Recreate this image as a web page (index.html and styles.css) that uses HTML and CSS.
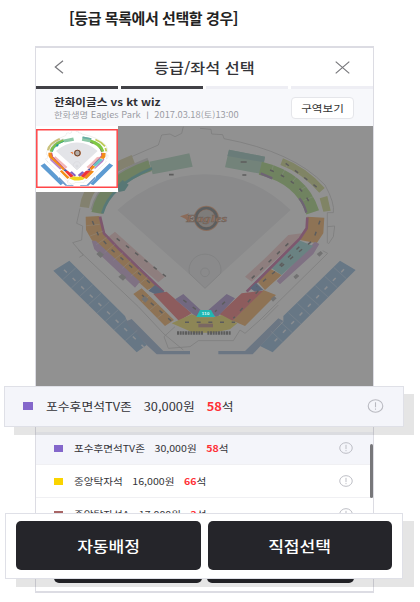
FILE: index.html
```html
<!DOCTYPE html>
<html lang="ko">
<head>
<meta charset="utf-8">
<title>등급/좌석 선택</title>
<link rel="stylesheet" href="styles.css">
</head>
<body>
<h1 class="caption">[등급 목록에서 선택할 경우]</h1>
<main class="phone">
  <header class="bar">
    <svg class="back" viewBox="0 0 10 14"><path d="M9 .8 1.3 7 9 13.2"/></svg>
    <h2 class="bar-title"><span class="wide">등급/좌석 선택</span></h2>
    <svg class="close" viewBox="0 0 15 13"><path d="M.7.6 14.3 12.4M14.3.6.7 12.4"/></svg>
  </header>
  <div class="steps"><i class="on"></i><i class="on"></i><i></i><i></i></div>
  <section class="game">
    <div class="game-text">
      <strong class="wide teams">한화이글스 vs kt wiz</strong>
      <span class="wide place">한화생명 Eagles Park ㅣ 2017.03.18(토)13:00</span>
    </div>
    <button class="zone"><span class="wide">구역보기</span></button>
  </section>
  <section class="map">
    <svg class="stadium" viewBox="18 18 1011 780" preserveAspectRatio="none">
      <defs>
        <g id="park">
          <g fill="none" stroke="#b4b4b4" stroke-width="2.5">
            <path d="M270 125 385 75 395 45 420 42 435 50 455 40 460 20M510 25 543 28 545 42 578 44 582 56Q790 95 885 195 915 250 910 278H892V370M892 320 914 318 910 350 895 372M878 392 893 400 690 600 645 640 630 630 610 662H505L480 680 415 685 402 650 435 620M150 265 140 310 158 318 155 360 128 368 160 405 148 412M145 390 325 560 402 642M745 555 700 600M402 642 460 690"/>
          </g>
          <path fill="#e3e4e8" d="M262 270Q380 165 520 163 670 160 782 270L525 505Z"/>
          <g fill="none" stroke="#c2c3c6" stroke-width="3"><path d="M478 460A48 48 0 1 1 572 460L525 505Z"/><circle cx="525" cy="457" r="13"/></g>
          <path fill="#8cc8a6" d="M358 125 478 100 488 140 368 163ZM597 89 705 110 695 162 585 142Z"/>
          <path fill="#68ada4" d="M597 89 705 110 702 127 592 108Z"/>
          <g fill="none">
            <path stroke="#c9c27c" stroke-width="28" d="M163 262Q175 170 310 118"/>
            <path stroke="#c5c6c5" stroke-width="14" d="M188 270Q212 175 355 120"/>
            <path stroke="#7fc04c" stroke-width="34" d="M201 279Q220 185 360 137"/>
            <path stroke="#20a09b" stroke-width="8" d="M217 280Q240 198 366 145"/>
            <path stroke="#80c844" stroke-width="40" d="M691 145Q815 175 848 277"/>
            <path stroke="#784e91" stroke-width="7" d="m692 160 35 15M808 235Q822 252 829 278"/>
            <path stroke="#becb56" stroke-width="22" d="M755 125Q822 150 876 211"/>
          </g>
          <path fill="#becb56" d="m869 235 23-7 10 44-22 3Z"/>
          <path fill="#249994" d="m264 194 14-14 18 14-12 18-18 4Z"/>
          <path fill="#f28c18" d="M167 290 208 288 222 340 265 385 378 497 352 510 230 400 185 360 168 330ZM310 522 335 505 432 600 405 618ZM700 510 738 525 645 618 608 602ZM680 482 718 445 755 465 705 510ZM832 290 883 293 880 340 860 370 810 360 832 325Z"/>
          <path fill="#b884c8" d="M185 362 197 362 330 485 315 503 193 388ZM855 365 868 372 850 402 750 493 740 483Z"/>
          <path fill="#f2b7b7" d="M230 355 255 335 405 470 385 487ZM645 470 705 415 775 345 815 340 808 355 665 485Z"/>
          <path fill="#68c5c5" d="M720 442 805 360 850 378 755 465Z"/>
          <path fill="none" stroke="#b32178" stroke-width="8" d="M210 290 222 340 268 388 400 515M832 292 830 325 810 355 650 515"/>
          <path fill="#345ea6" d="M355 512 375 495 412 522 380 525ZM660 505 678 488 700 510 675 515Z"/>
          <path fill="#ef3338" d="M370 522 410 515 485 580 447 603ZM568 582 635 520 700 512 605 605Z"/>
          <path fill="#8662bd" d="M435 538 460 522 512 570 500 592ZM535 570 590 522 615 535 560 593Z"/>
          <path fill="#f0d51d" d="M425 610 485 583 510 592H550L575 585 622 610 600 628 550 638H490Z"/>
          <path fill="#5d9bd2" d="M70 452 118 422 285 588 290 600 350 675 320 697ZM930 422 977 450 728 697 690 678 760 605V588Z"/>
          <path fill="#6b98ca" d="M285 605 305 597 400 693H480V703H380L350 675ZM565 693H645L745 595 760 603 668 703H565Z"/>
        </g>
        <g id="emblem">
          <circle cx="529" cy="295" r="32" fill="#b5ada8" stroke="#e37738" stroke-width="12"/>
          <circle cx="529" cy="295" r="31" fill="none" stroke="#303a40" stroke-width="8"/>
          <path fill="#e96e2a" d="m450 289 28-9-8 9 17-1-14 10 15 1-13 8-8-10Z"/>
        </g>
      </defs>
      <use href="#park"/>
      <path fill="none" stroke="#fff" stroke-opacity=".5" stroke-width="2" d="m98 479 39-35M124 504l38-35M149 529l39-35M175 554l38-34M201 579l37-34M226 604l38-34M252 630l36-31M286 662l36-31M949 476l-38-34M922 503l-38-34M894 531l-38-34M868 557l-39-34M840 585l-38-35M813 612l-38-34M787 638l-38-34M758 666l-36-33M169 317l40-4M178 349l42-16M199 374l31-22M224 398l30-25M250 421l29-23M277 445l26-23M302 469l27-22M327 493l26-22M335 547l26-22M358 571l27-21M382 594l26-20M726 150l10-35M756 165l17-32M786 187l22-27M806 213l31-19M820 242l34-14"/>
      <path fill="#a75f49" d="M505 611h44v11h-44Z"/>
      <path fill="none" stroke="#333" stroke-width="4.5" stroke-dasharray="12 23" d="M187 303 205 345 240 385 375 502M336 525 432 610M260 355 415 475M685 512 610 595M870 302 850 360 680 500M720 150Q820 190 845 265M767 130 865 205M775 370 660 480M808 380 735 450M460 540 500 570M585 545 555 575M465 607h150"/>
      <path fill="none" stroke="#e4eefa" stroke-width="4.5" stroke-dasharray="12 24" d="M102 449 345 685M942 448 728 670"/>
      <path fill="none" stroke="#333" stroke-width="5" d="M417 164h14M632 126h18M637 165h12"/>
      <path fill="none" stroke="#333" stroke-width="10" stroke-dasharray="6 2" d="M441 639h79M532 639h72"/>
      <path fill="#888" d="m201 412 10-9 13 11-10 10ZM267 480l11-9 13 11-10 10ZM336 547l10-9 12 10-10 10ZM862 412l12-9 7 7-11 10ZM792 480l10-9 8 7-11 10ZM724 547l10-9 8 7-11 10Z" transform="translate(-2 -10)"/>
      <use href="#emblem"/>
      <text class="emblem" x="468" y="306" textLength="124" lengthAdjust="spacingAndGlyphs">Eagles</text>
      <path class="dim" d="M18 18h1011v780H18z"/>
      <path fill="#21b7b2" d="M499 591 510 570H543L555 591Z"/>
      <text class="picked" x="515" y="586" textLength="23">110</text>
    </svg>
    <svg class="mini" viewBox="0 0 82 66"><path fill="#fff" d="M0 0h82v66H0z"/><svg x="0" y="3" width="82" height="59" viewBox="36 129 82 59"><use href="#park" transform="translate(35 129.5) scale(.08)"/><use href="#emblem" transform="translate(29.8 126.5) scale(.09)"/></svg><path fill="none" stroke="#ff4648" stroke-width="1.5" d="M.8 3.8h80.4v57.4H.8z"/></svg>
  </section>
  <section class="grades">
    <div class="grade active"><i class="chip violet"></i><div class="grade-text"><span>포수후면석TV존</span><span>30,000원</span><span><b>58</b>석</span></div><svg class="info" viewBox="0 0 16 14"><ellipse cx="8" cy="7" rx="7.3" ry="6.2"/><path d="M8 3.3v5M8 9.5v1.2"/></svg></div>
    <div class="grade"><i class="chip yellow"></i><div class="grade-text"><span>중앙탁자석</span><span>16,000원</span><span><b>66</b>석</span></div><svg class="info" viewBox="0 0 16 14"><ellipse cx="8" cy="7" rx="7.3" ry="6.2"/><path d="M8 3.3v5M8 9.5v1.2"/></svg></div>
    <div class="grade"><i class="chip brown"></i><div class="grade-text"><span>중앙탁자석A</span><span>17,000원</span><span><b>2</b>석</span></div><svg class="info" viewBox="0 0 16 14"><ellipse cx="8" cy="7" rx="7.3" ry="6.2"/><path d="M8 3.3v5M8 9.5v1.2"/></svg></div>
    <i class="thumb"></i>
  </section>
  <footer class="under"><i></i><i></i></footer>
  <div class="callout pick"><i class="chip violet"></i><div class="grade-text"><span>포수후면석TV존</span><span>30,000원</span><span><b>58</b>석</span></div><svg class="info" viewBox="0 0 16 14"><ellipse cx="8" cy="7" rx="7.3" ry="6.2"/><path d="M8 3.3v5M8 9.5v1.2"/></svg></div>
  <div class="callout actions"><button><span class="wide">자동배정</span></button><button><span class="wide">직접선택</span></button></div>
</main>
</body>
</html>
```
FILE: styles.css
```css
* { box-sizing: border-box; }
body { margin: 0; width: 420px; height: 602px; overflow: hidden; background: #fff; color: #333338; font-family: "Noto Sans CJK KR", sans-serif; }
h1, h2 { margin: 0; }
button { padding: 0; font-family: inherit; }
i { display: block; }
.wide { display: inline-block; white-space: nowrap; transform: scaleX(1.16); }
.caption { height: 46px; padding: 7px 0 0 69px; font-size: 15px; line-height: 21px; font-weight: 700; letter-spacing: -.42px; color: #222; white-space: nowrap; }
.phone { position: relative; width: 339px; height: 547px; margin-left: 35px; border: 1px solid #dcdce3; border-top-width: 2px; border-bottom-width: 2px; display: flex; flex-direction: column; }
.bar { height: 38px; display: flex; align-items: center; justify-content: space-between; padding: 0 23px 0 18px; }
.bar svg { fill: none; stroke: #77777b; stroke-width: 1.2; }
.back { width: 10px; height: 14px; }
.close { width: 15px; height: 13px; }
.bar-title { padding-left: 10px; font-size: 14px; line-height: 20px; font-weight: 500; }
.steps { height: 3px; display: grid; grid-template-columns: repeat(4, 1fr); gap: 3px; background: #fff; }
.steps i { background: #eeeef4; }
.steps .on { background: #414146; }
.game { height: 37px; background: #f7f8fb; display: flex; justify-content: space-between; align-items: center; padding: 0 19px 0 18px; }
.game-text { display: flex; flex-direction: column; align-items: flex-start; }
.game-text .wide { transform-origin: left; }
.teams { font-size: 10px; line-height: 13px; color: #2f2f34; }
.game-text .place { font-size: 8.5px; line-height: 12px; color: #9b9ca4; transform: scaleX(1.09); }
.zone { width: 63px; height: 22px; flex: none; border: 1px solid #e5e6ea; border-radius: 4px; background: #fff; color: #333; font-size: 9.5px; line-height: 18px; }
.zone .wide { transform: scaleX(1.22); }
.map { position: relative; height: 260px; }
.stadium { display: block; width: 337px; height: 260px; }
.dim { fill: #6a6a6a; fill-opacity: .74; }
.emblem { font: italic 900 30px "Liberation Serif", serif; fill: #ff7420; stroke: #634131; stroke-width: 1; }
.picked { font: 700 13px "Liberation Sans", sans-serif; fill: #e5ffff; }
.mini { position: absolute; left: 0; top: 0; width: 82px; height: 66px; }
.grades { position: relative; height: 142px; padding-top: 46px; overflow: hidden; }
.grade { height: 33px; display: flex; align-items: center; padding: 0 20px 0 18px; border-bottom: 1px solid #f0f0f3; }
.grade.active { background: #f4f5fa; }
.grades .grade:first-child { box-shadow: 0 -46px 0 #f4f5fa; }
.chip { width: 9px; height: 7px; flex: none; }
.violet { background: #8467cb; }
.yellow { background: #fad400; }
.brown { background: #a86565; }
.grade-text { display: flex; gap: 8.5px; margin-left: 10.5px; font-size: 9.4px; line-height: 14px; white-space: nowrap; transform: scaleX(1.13); transform-origin: left; }
.grade-text b { color: #ff3036; }
.info { width: 14px; height: 12px; margin-left: auto; fill: none; stroke: #b9bac1; stroke-width: 1.1; }
.thumb { position: absolute; right: 0; top: 58px; width: 3px; height: 54px; border-radius: 2px; background: #77777a; }
.under { flex: 1; display: flex; gap: 5px; padding: 0 19px 8px 18px; }
.under i { flex: 1; background: #25252a; border-radius: 0 0 5px 5px; }
.callout { position: absolute; border: 1px solid #dfe0e7; display: flex; align-items: center; }
.callout::after { content: ""; position: absolute; z-index: -1; left: 11px; top: 8px; right: -11px; bottom: -9px; }
.pick { left: -32px; top: 338px; width: 400px; height: 41px; background: #f4f5fa; padding: 0 19px 1px 18px; box-shadow: 10px 8px 0 rgba(0, 0, 0, .1); }
.pick .chip { width: 10px; height: 8px; }
.pick .grade-text { margin-left: 13px; font-size: 11.3px; gap: 10.5px; line-height: 18px; transform: scaleX(1.135); }
.pick .info { width: 17px; height: 14px; }
.actions { left: -31px; top: 465px; width: 398px; height: 66px; background: #fff; padding: 0 10px 2px; gap: 7px; box-shadow: 11px 8px 0 rgba(0, 0, 0, .1); }
.actions button { flex: 1; height: 49px; border: 0; border-radius: 5px; background: #25252a; color: #fff; font-size: 15px; font-weight: 500; }
.actions .wide { transform: scaleX(1.14); }
```
